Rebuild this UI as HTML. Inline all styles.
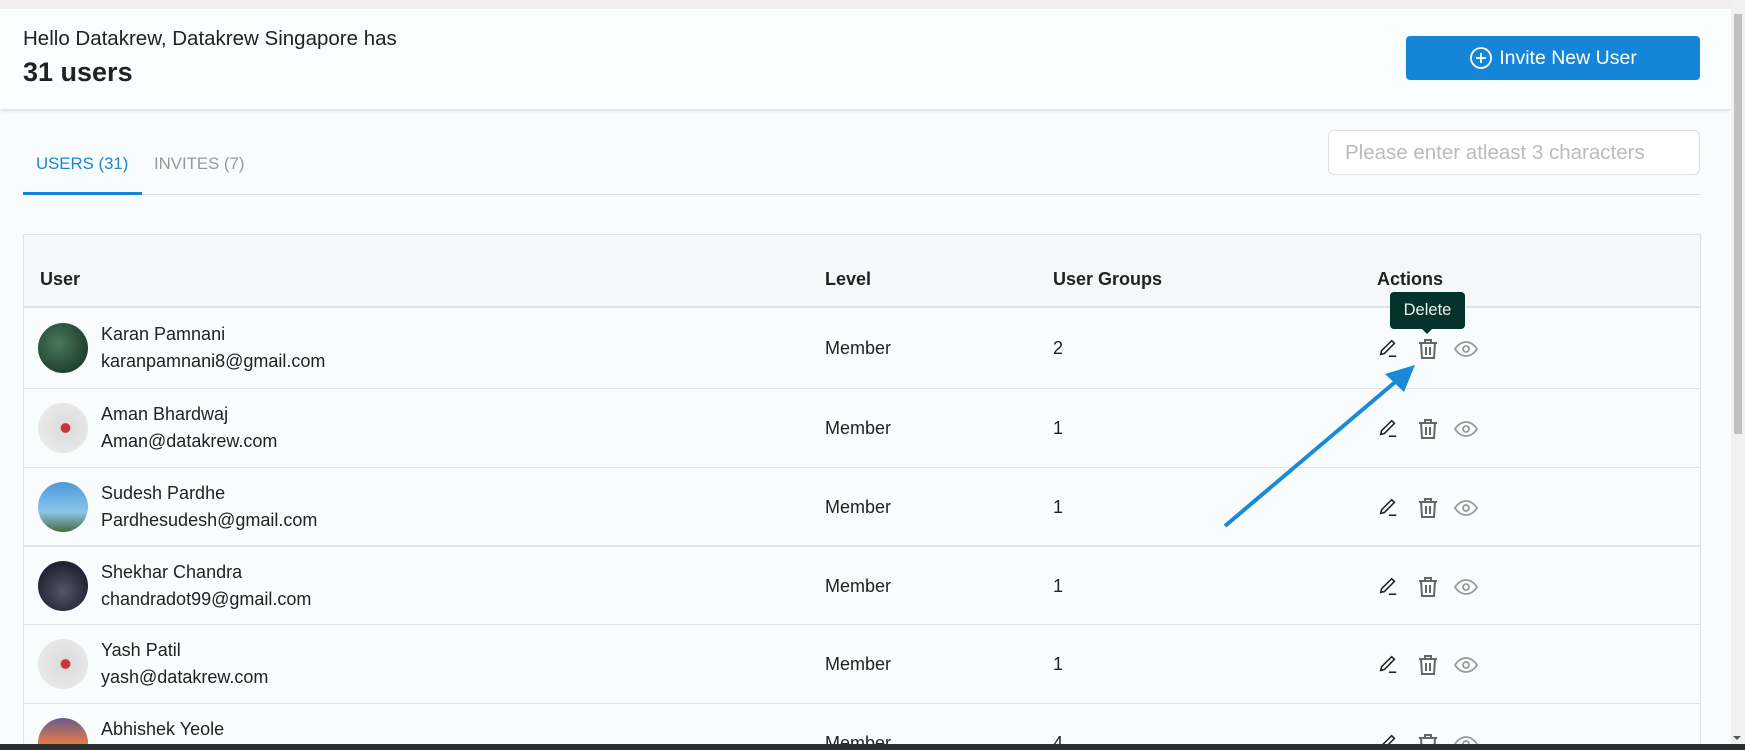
<!DOCTYPE html>
<html><head><style>
*{margin:0;padding:0;box-sizing:border-box}
html,body{width:1745px;height:750px;overflow:hidden}
body{background:#f8fcfd;font-family:"Liberation Sans",sans-serif;color:#222}
#w{position:relative;width:1745px;height:750px;overflow:hidden}
.abs{position:absolute}
.top{left:0;top:0;width:1731px;height:9px;background:#efefef}
.hdr{left:0;top:9px;width:1731px;height:100px;background:#f9fdfe;box-shadow:0 2px 3px rgba(0,0,0,.12)}
.btn{left:1406px;top:36px;width:294px;height:44px;background:#1585d8;border-radius:4px;color:#fff;font-size:19.5px;display:flex;align-items:center;justify-content:center;gap:6px}
.tab{font-size:16.8px;top:154px}
.row{left:23px;width:1677px;height:79px;border-top:1px solid #dfe3e5}
.name{font-size:18px;position:absolute;left:78px;top:15px;color:#222}
.email{font-size:18px;position:absolute;left:78px;top:42px}
.av{position:absolute;left:15px;top:14px;width:50px;height:50px;border-radius:50%}
.cell{position:absolute;top:29px;font-size:18px}
.ic{position:absolute;top:28px}
</style></head><body><div id="w">
<div class="abs top"></div>
<div class="abs hdr"></div>
<div class="abs" style="left:23px;top:27px;font-size:20.5px">Hello Datakrew, Datakrew Singapore has</div>
<div class="abs" style="left:23px;top:57px;font-size:27px;font-weight:bold">31 users</div>
<div class="abs btn"><svg width="24" height="24" viewBox="0 0 24 24" fill="none" stroke="#fff" stroke-width="1.8"><circle cx="12" cy="12" r="10"/><path d="M12 7v10M7 12h10"/></svg>Invite New User</div>
<div class="abs tab" style="left:36px;color:#1a86d6">USERS (31)</div>
<div class="abs tab" style="left:154px;color:#999">INVITES (7)</div>
<div class="abs" style="left:23px;top:194px;width:1677px;height:1px;background:#dcdfe1"></div>
<div class="abs" style="left:23px;top:192px;width:119px;height:3px;background:#1585d8"></div>
<div class="abs" style="left:1328px;top:130px;width:372px;height:45px;border:1px solid #dcdfe1;border-radius:6px;background:#fff;color:#bbb;font-size:20.5px;padding:10px 16px;white-space:nowrap">Please enter atleast 3 characters</div>
<div class="abs" style="left:23px;top:234px;width:1678px;height:520px;border:1px solid #dfe3e5;border-bottom:none;background:#f8fcfd"></div>
<div class="abs" style="left:24px;top:235px;width:1676px;height:73px;background:#f5f8f9;border-bottom:2px solid #dfe3e5"></div>
<div class="abs" style="top:269px;left:40px;font-size:18px;font-weight:bold">User</div>
<div class="abs" style="top:269px;left:825px;font-size:18px;font-weight:bold">Level</div>
<div class="abs" style="top:269px;left:1053px;font-size:18px;font-weight:bold">User Groups</div>
<div class="abs" style="top:269px;left:1377px;font-size:18px;font-weight:bold">Actions</div>

<div class="abs row" style="top:309px;border-top:none">
<div class="av" style="background:radial-gradient(circle at 40% 40%,#4a7a5a,#0f2a1e)"></div><div class="name">Karan Pamnani</div><div class="email">karanpamnani8@gmail.com</div><div class="cell" style="left:802px">Member</div><div class="cell" style="left:1030px">2</div>
<div class="ic" style="left:1354px"><svg width="22" height="22" viewBox="0 0 24 24" fill="none" stroke="#222" stroke-width="1.7"><path d="M4 19l1-4L16 4l3 3L8 18z"/><path d="M13 21h8"/></svg></div>
<div class="ic" style="left:1393px"><svg width="24" height="24" viewBox="0 0 24 24" fill="none" stroke="#666" stroke-width="2"><path d="M3 6h18M9 6V3h6v3M5 6l1 15h12l1-15M10 10v8M14 10v8"/></svg></div>
<div class="ic" style="left:1431px"><svg width="24" height="24" viewBox="0 0 24 24" fill="none" stroke="#999" stroke-width="1.8"><path d="M1 12s4-7 11-7 11 7 11 7-4 7-11 7S1 12 1 12z"/><circle cx="12" cy="12" r="3"/></svg></div>
</div>
<div class="abs row" style="top:388px">
<div class="av" style="background:radial-gradient(circle at 55% 50%,#c33 0 12%,#ddd 14%,#eee)"></div><div class="name">Aman Bhardwaj</div><div class="email">Aman@datakrew.com</div><div class="cell" style="left:802px">Member</div><div class="cell" style="left:1030px">1</div>
<div class="ic" style="left:1354px"><svg width="22" height="22" viewBox="0 0 24 24" fill="none" stroke="#222" stroke-width="1.7"><path d="M4 19l1-4L16 4l3 3L8 18z"/><path d="M13 21h8"/></svg></div>
<div class="ic" style="left:1393px"><svg width="24" height="24" viewBox="0 0 24 24" fill="none" stroke="#666" stroke-width="2"><path d="M3 6h18M9 6V3h6v3M5 6l1 15h12l1-15M10 10v8M14 10v8"/></svg></div>
<div class="ic" style="left:1431px"><svg width="24" height="24" viewBox="0 0 24 24" fill="none" stroke="#999" stroke-width="1.8"><path d="M1 12s4-7 11-7 11 7 11 7-4 7-11 7S1 12 1 12z"/><circle cx="12" cy="12" r="3"/></svg></div>
</div>
<div class="abs row" style="top:467px">
<div class="av" style="background:linear-gradient(#4a9ad8,#8cc4ea 60%,#4a6a40)"></div><div class="name">Sudesh Pardhe</div><div class="email">Pardhesudesh@gmail.com</div><div class="cell" style="left:802px">Member</div><div class="cell" style="left:1030px">1</div>
<div class="ic" style="left:1354px"><svg width="22" height="22" viewBox="0 0 24 24" fill="none" stroke="#222" stroke-width="1.7"><path d="M4 19l1-4L16 4l3 3L8 18z"/><path d="M13 21h8"/></svg></div>
<div class="ic" style="left:1393px"><svg width="24" height="24" viewBox="0 0 24 24" fill="none" stroke="#666" stroke-width="2"><path d="M3 6h18M9 6V3h6v3M5 6l1 15h12l1-15M10 10v8M14 10v8"/></svg></div>
<div class="ic" style="left:1431px"><svg width="24" height="24" viewBox="0 0 24 24" fill="none" stroke="#999" stroke-width="1.8"><path d="M1 12s4-7 11-7 11 7 11 7-4 7-11 7S1 12 1 12z"/><circle cx="12" cy="12" r="3"/></svg></div>
</div>
<div class="abs row" style="top:545px;border-top:2px solid #dfe3e5">
<div class="av" style="background:radial-gradient(circle at 50% 60%,#556,#223 70%)"></div><div class="name">Shekhar Chandra</div><div class="email">chandradot99@gmail.com</div><div class="cell" style="left:802px">Member</div><div class="cell" style="left:1030px">1</div>
<div class="ic" style="left:1354px"><svg width="22" height="22" viewBox="0 0 24 24" fill="none" stroke="#222" stroke-width="1.7"><path d="M4 19l1-4L16 4l3 3L8 18z"/><path d="M13 21h8"/></svg></div>
<div class="ic" style="left:1393px"><svg width="24" height="24" viewBox="0 0 24 24" fill="none" stroke="#666" stroke-width="2"><path d="M3 6h18M9 6V3h6v3M5 6l1 15h12l1-15M10 10v8M14 10v8"/></svg></div>
<div class="ic" style="left:1431px"><svg width="24" height="24" viewBox="0 0 24 24" fill="none" stroke="#999" stroke-width="1.8"><path d="M1 12s4-7 11-7 11 7 11 7-4 7-11 7S1 12 1 12z"/><circle cx="12" cy="12" r="3"/></svg></div>
</div>
<div class="abs row" style="top:624px">
<div class="av" style="background:radial-gradient(circle at 55% 50%,#c33 0 12%,#ddd 14%,#eee)"></div><div class="name">Yash Patil</div><div class="email">yash@datakrew.com</div><div class="cell" style="left:802px">Member</div><div class="cell" style="left:1030px">1</div>
<div class="ic" style="left:1354px"><svg width="22" height="22" viewBox="0 0 24 24" fill="none" stroke="#222" stroke-width="1.7"><path d="M4 19l1-4L16 4l3 3L8 18z"/><path d="M13 21h8"/></svg></div>
<div class="ic" style="left:1393px"><svg width="24" height="24" viewBox="0 0 24 24" fill="none" stroke="#666" stroke-width="2"><path d="M3 6h18M9 6V3h6v3M5 6l1 15h12l1-15M10 10v8M14 10v8"/></svg></div>
<div class="ic" style="left:1431px"><svg width="24" height="24" viewBox="0 0 24 24" fill="none" stroke="#999" stroke-width="1.8"><path d="M1 12s4-7 11-7 11 7 11 7-4 7-11 7S1 12 1 12z"/><circle cx="12" cy="12" r="3"/></svg></div>
</div>
<div class="abs row" style="top:703px">
<div class="av" style="background:linear-gradient(#6a5a8a,#e07a4a 50%,#c04a3a)"></div><div class="name">Abhishek Yeole</div><div class="cell" style="left:802px">Member</div><div class="cell" style="left:1030px">4</div>
<div class="ic" style="left:1354px"><svg width="22" height="22" viewBox="0 0 24 24" fill="none" stroke="#222" stroke-width="1.7"><path d="M4 19l1-4L16 4l3 3L8 18z"/></svg></div>
<div class="ic" style="left:1393px"><svg width="24" height="24" viewBox="0 0 24 24" fill="none" stroke="#666" stroke-width="2"><path d="M3 6h18M9 6V3h6v3M5 6l1 15h12l1-15"/></svg></div>
<div class="ic" style="left:1431px"><svg width="24" height="24" viewBox="0 0 24 24" fill="none" stroke="#999" stroke-width="1.8"><path d="M1 12s4-7 11-7 11 7 11 7-4 7-11 7S1 12 1 12z"/><circle cx="12" cy="12" r="3"/></svg></div>
</div>

<div class="abs" style="left:1390px;top:292px;width:75px;height:37px;background:#04332c;border-radius:4px;color:#eee;font-size:16.5px;text-align:center;line-height:37px">Delete</div>
<div class="abs" style="left:1421px;top:328px;width:0;height:0;border-left:6px solid transparent;border-right:6px solid transparent;border-top:6px solid #04332c"></div>
<svg class="abs" style="left:0;top:0" width="1745" height="750"><line x1="1225" y1="526" x2="1400" y2="378" stroke="#1a8ad8" stroke-width="4"/><polygon points="1415,365 1385,374 1404,392" fill="#1a8ad8"/></svg>

<div class="abs" style="left:1731px;top:0;width:14px;height:745px;background:#f1f1f1"></div>
<div class="abs" style="left:1734px;top:14px;width:8px;height:420px;background:#c1c1c1"></div>
<div class="abs" style="left:1733px;top:736px;border-left:4px solid transparent;border-right:4px solid transparent;border-top:4px solid #555"></div>
<div class="abs" style="left:0;top:744px;width:1745px;height:6px;background:#2a2f30"></div>
</div></body></html>
